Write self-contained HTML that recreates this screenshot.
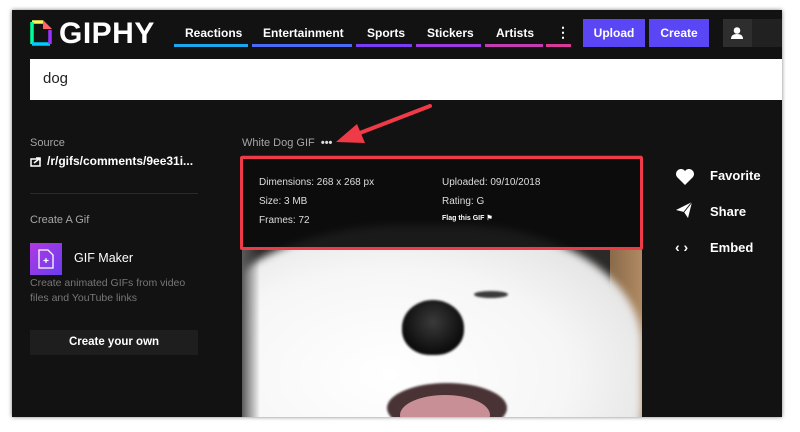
<!DOCTYPE html>
<html><head><meta charset="utf-8"><style>
*{margin:0;padding:0;box-sizing:border-box}
html,body{width:800px;height:432px;overflow:hidden}
body{background:#fff;font-family:"Liberation Sans",sans-serif;position:relative}
.panel{position:absolute;left:12px;top:10px;width:770px;height:407px;background:#121212;box-shadow:0 0 4px rgba(0,0,0,.5)}
.a{position:absolute}
.nav{color:#fff;font-weight:bold;font-size:12px}
.ul{position:absolute;height:3px;top:44px}
.btn{position:absolute;top:19px;height:28px;background:#5a46f5;color:#fff;font-weight:bold;font-size:12px;line-height:28px;text-align:center}
.g{color:#a6a6a6;font-size:11px}
.w{color:#fff}
.info{color:#ddd;font-size:10px}
</style></head><body>
<div class="panel"></div>
<svg class="a" style="left:29px;top:19px" width="26" height="28" viewBox="0 0 26 28">
<line x1="3" y1="3" x2="14" y2="3" stroke="#fff35c" stroke-width="3.5"/>
<line x1="3" y1="3" x2="3" y2="25" stroke="#00ff99" stroke-width="3.5"/>
<line x1="3" y1="25" x2="21" y2="25" stroke="#00ccff" stroke-width="3.5"/>
<line x1="21" y1="25" x2="21" y2="11" stroke="#9933ff" stroke-width="3.5"/>
<path d="M14 1 L23 10 H14 Z" fill="#ff6666"/>
</svg>
<div class="a" style="left:59px;top:17px;color:#fff;font-weight:bold;font-size:30px;letter-spacing:0.5px">GIPHY</div>
<div class="a nav" style="left:185px;top:26px">Reactions</div>
<div class="ul" style="left:174px;width:74px;background:#1ca6ee"></div>
<div class="a nav" style="left:263px;top:26px">Entertainment</div>
<div class="ul" style="left:252px;width:100px;background:#4a6cf5"></div>
<div class="a nav" style="left:367px;top:26px">Sports</div>
<div class="ul" style="left:356px;width:56px;background:#7a3cf5"></div>
<div class="a nav" style="left:427px;top:26px">Stickers</div>
<div class="ul" style="left:416px;width:65px;background:#9b3ae0"></div>
<div class="a nav" style="left:496px;top:26px">Artists</div>
<div class="ul" style="left:485px;width:58px;background:#c33cb0"></div>
<div class="a nav" style="left:556px;top:24px;font-size:14px">⋮</div>
<div class="ul" style="left:546px;width:25px;background:#d93a9a"></div>
<div class="btn" style="left:583px;width:62px">Upload</div>
<div class="btn" style="left:649px;width:60px">Create</div>
<div class="a" style="left:723px;top:19px;width:29px;height:28px;background:#2e2e2e"></div>
<div class="a" style="left:752px;top:19px;width:30px;height:28px;background:#212121"></div>
<svg class="a" style="left:730px;top:26px" width="14" height="14" viewBox="0 0 14 14"><circle cx="7" cy="4.5" r="3.3" fill="#fff"/><path d="M1 13 Q1 8 7 8 Q13 8 13 13Z" fill="#fff"/></svg>
<div class="a" style="left:30px;top:59px;width:752px;height:41px;background:#fff"></div>
<div class="a" style="left:43px;top:70px;font-size:15px;color:#222">dog</div>
<div class="a g" style="left:30px;top:137px">Source</div>
<svg class="a" style="left:30px;top:156px" width="12" height="11" viewBox="0 0 12 11"><rect x="1" y="3" width="9" height="7" fill="none" stroke="#fff" stroke-width="1.5"/><path d="M4 7 L9 3 M6 2 H10 V5" stroke="#fff" stroke-width="1.5" fill="none"/></svg>
<div class="a w" style="left:47px;top:154px;font-size:12px;font-weight:bold">/r/gifs/comments/9ee31i...</div>
<div class="a" style="left:30px;top:193px;width:168px;height:1px;background:#2a2a2a"></div>
<div class="a g" style="left:30px;top:214px">Create A Gif</div>
<div class="a" style="left:30px;top:243px;width:32px;height:32px;background:linear-gradient(135deg,#b03ae0,#6a3cf0)"></div>
<svg class="a" style="left:38px;top:249px" width="16" height="20" viewBox="0 0 16 20"><path d="M1 1 H10 L15 6 V19 H1Z" fill="none" stroke="#fff" stroke-width="1.3"/><path d="M8 9 V14 M5.5 11.5 H10.5" stroke="#fff" stroke-width="1.2"/></svg>
<div class="a w" style="left:74px;top:251px;font-size:12.5px">GIF Maker</div>
<div class="a" style="left:30px;top:276px;font-size:10.5px;color:#777;line-height:15px">Create animated GIFs from video<br>files and YouTube links</div>
<div class="a" style="left:30px;top:330px;width:168px;height:25px;background:#1e1e1e;color:#fff;font-weight:bold;font-size:11.5px;text-align:center;line-height:25px">Create your own</div>
<div class="a g" style="left:242px;top:137px">White Dog GIF &nbsp;<b style="color:#ddd">•••</b></div>
<!-- image -->
<div class="a" style="left:242px;top:155px;width:400px;height:262px;overflow:hidden;background:#2c2a29">
<div class="a" style="left:368px;top:95px;width:32px;height:167px;background:linear-gradient(90deg,#8a6a4a,#b08a62)"></div>
<div class="a" style="left:-60px;top:70px;width:460px;height:300px;border-radius:48% 40% 40% 45%;background:radial-gradient(ellipse at 45% 50%,#fff 0%,#f6f6f6 50%,#e6e6e6 75%,#bdbdbd 100%);filter:blur(4px)"></div>
<div class="a" style="left:0;top:95px;width:18px;height:167px;background:linear-gradient(90deg,#5a5a5a,rgba(230,230,230,0))"></div>
<div class="a" style="left:160px;top:145px;width:62px;height:55px;border-radius:50% 50% 45% 45%;background:radial-gradient(circle at 50% 40%,#3a3a3a,#0c0c0c 70%);filter:blur(1px)"></div>
<div class="a" style="left:232px;top:136px;width:34px;height:7px;border-radius:50%;background:#3a3a3a;filter:blur(1px)"></div>
<div class="a" style="left:145px;top:228px;width:120px;height:50px;border-radius:50%;background:#4a3335;filter:blur(1px)"></div>
<div class="a" style="left:158px;top:240px;width:90px;height:40px;border-radius:50%;background:#c89096"></div>
</div>
<div class="a" style="left:242px;top:158px;width:398px;height:90px;background:rgba(10,10,10,.93)"></div>
<div class="a" style="left:240px;top:156px;width:403px;height:94px;border:3px solid #ef3a47;border-radius:2px"></div>
<div class="a info" style="left:259px;top:177px">Dimensions: 268 x 268 px</div>
<div class="a info" style="left:259px;top:196px">Size: 3 MB</div>
<div class="a info" style="left:259px;top:215px">Frames: 72</div>
<div class="a info" style="left:442px;top:177px">Uploaded: 09/10/2018</div>
<div class="a info" style="left:442px;top:196px">Rating: G</div>
<div class="a" style="left:442px;top:214px;font-size:7px;color:#fff;font-weight:bold">Flag this GIF ⚑</div>
<svg class="a" style="left:675px;top:168px" width="20" height="18" viewBox="0 0 20 18"><path d="M10 17 L2 9 A4.8 4.8 0 0 1 10 3 A4.8 4.8 0 0 1 18 9Z" fill="#fff"/></svg>
<div class="a w" style="left:710px;top:168px;font-size:13px;font-weight:bold">Favorite</div>
<svg class="a" style="left:675px;top:201px" width="18" height="18" viewBox="0 0 18 18"><path d="M1 9 L17 1 L13 17 L9 11Z" fill="#fff"/><path d="M9 11 L17 1" stroke="#121212" stroke-width="1"/></svg>
<div class="a w" style="left:710px;top:204px;font-size:13px;font-weight:bold">Share</div>
<div class="a w" style="left:675px;top:239px;font-size:14px;font-weight:bold">‹ ›</div>
<div class="a w" style="left:710px;top:240px;font-size:13px;font-weight:bold">Embed</div>
<svg class="a" style="left:0;top:0" width="800" height="432"><line x1="430" y1="106" x2="352" y2="136" stroke="#ef3a47" stroke-width="4" stroke-linecap="round"/><path d="M336 142 L357 124 L365 143Z" fill="#ef3a47"/></svg>
</body></html>
